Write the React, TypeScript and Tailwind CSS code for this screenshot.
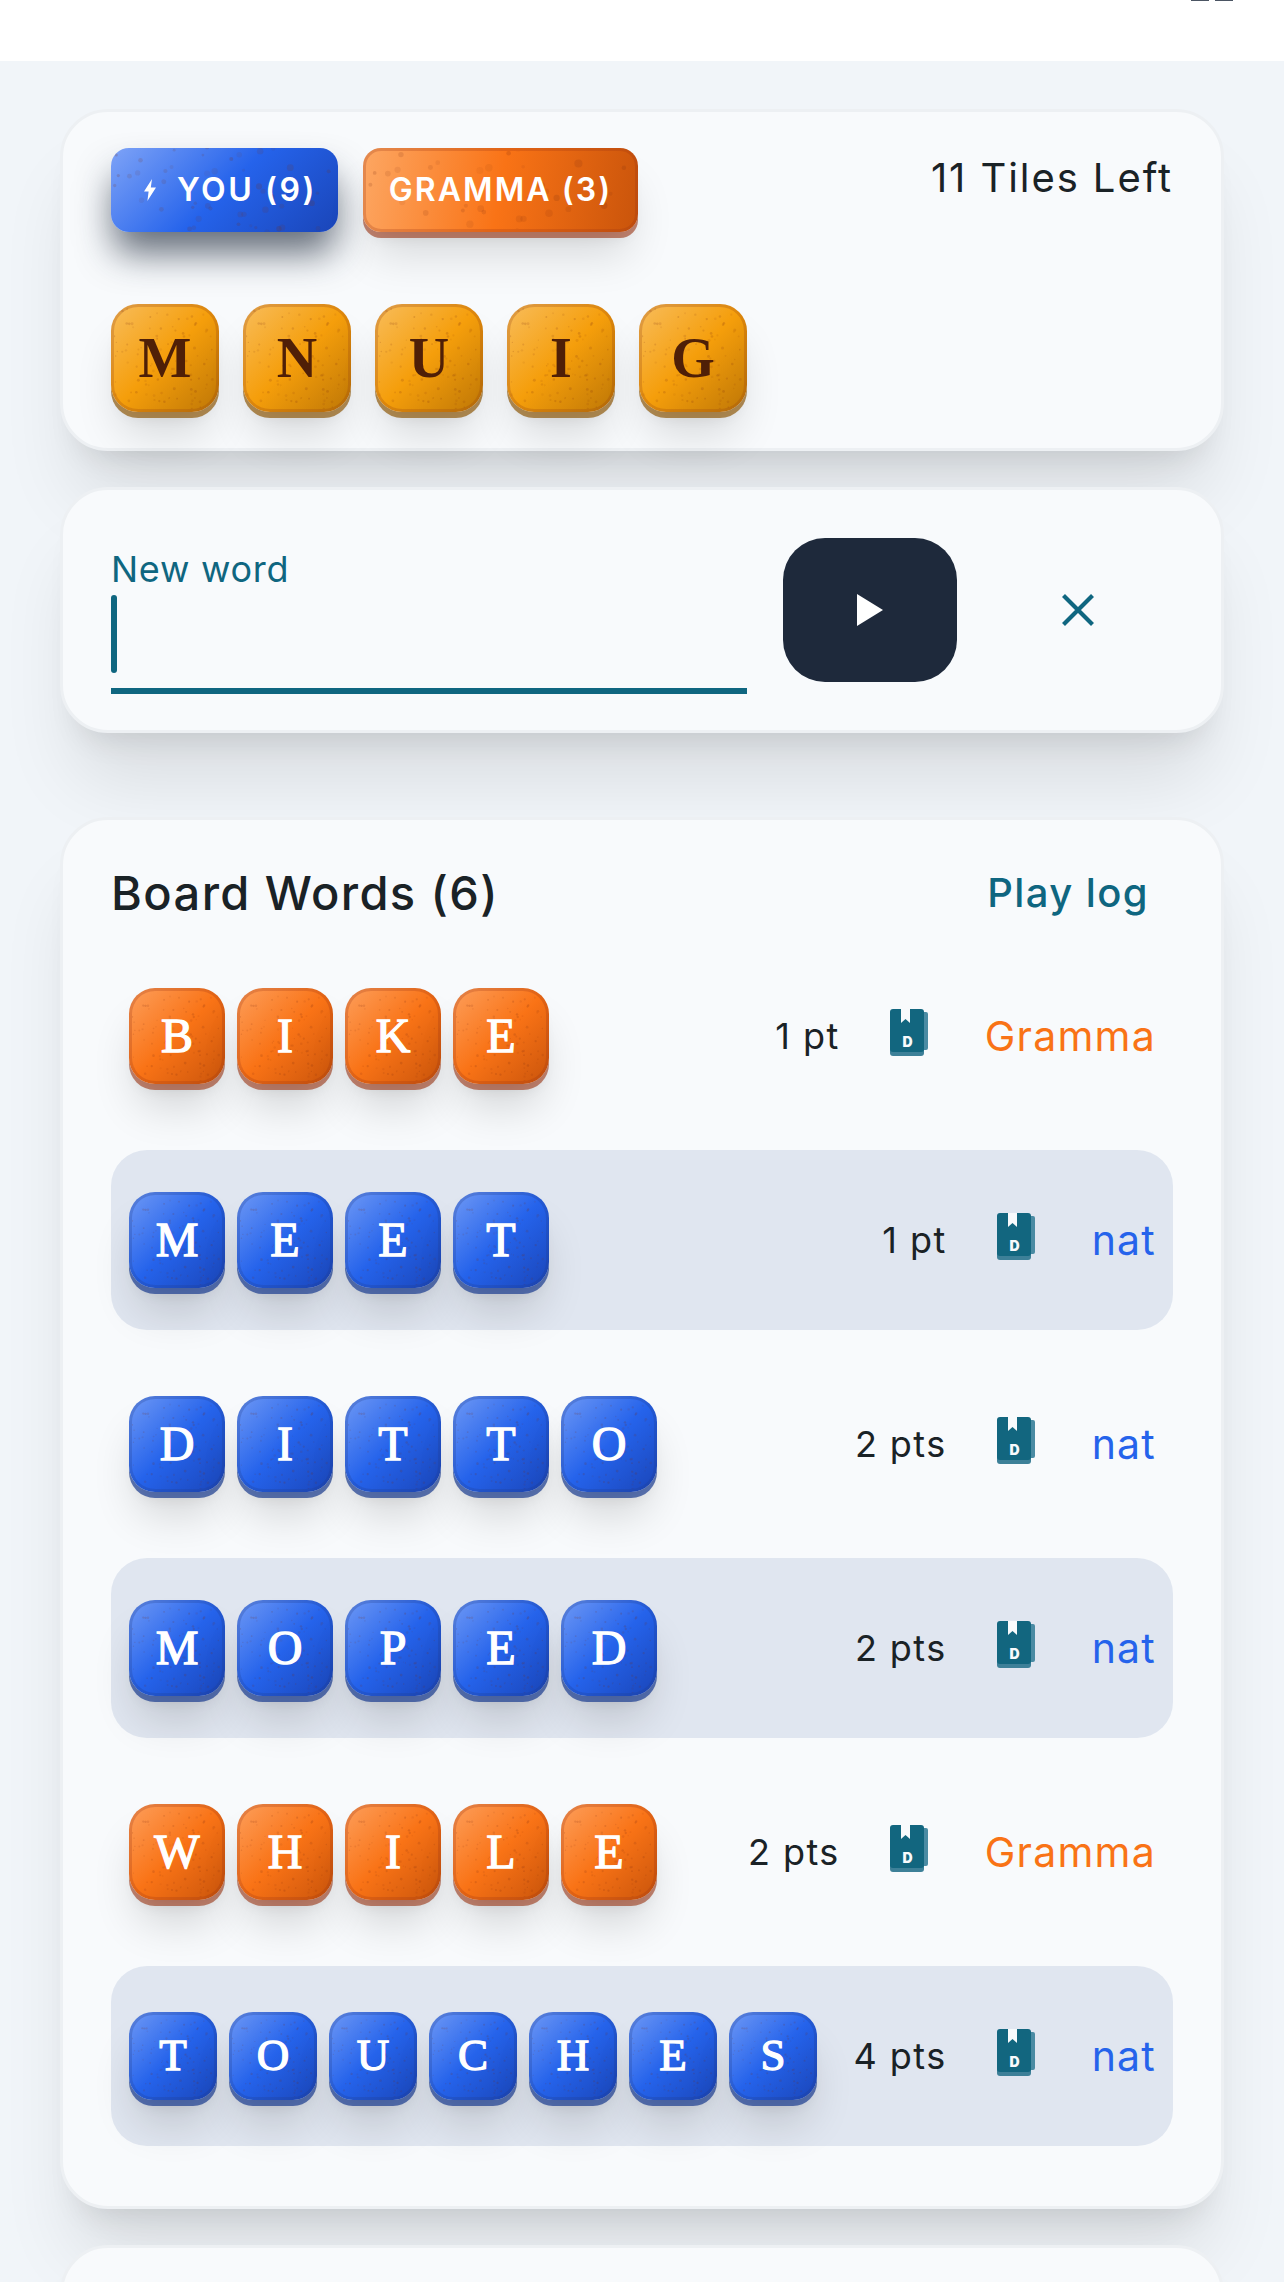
const font = { fontFamily: 'Inter, sans-serif' }

// same speckle layout on every tile, like a shared background image
function seeded(seed: number) {
  let s = seed
  return () => {
    s = (s * 9301 + 49297) % 233280
    return s / 233280
  }
}

const rand = seeded(41)
const specks = Array.from({ length: 110 }, () => ({
  x: rand() * 100,
  y: rand() * 100,
  r: 0.6 + rand() * 0.9,
  o: 0.06 + rand() * 0.14,
}))

function Speckle() {
  return (
    <svg viewBox="0 0 100 100" preserveAspectRatio="xMidYMid slice" className="absolute inset-0 h-full w-full pointer-events-none">
      {specks.map((p, i) => (
        <circle key={i} cx={p.x} cy={p.y} r={p.r} fill="#7c2d12" opacity={p.o} />
      ))}
    </svg>
  )
}

function Tile({ letter, color, size }: { letter: string; color: 'orange' | 'blue'; size: 'md' | 'sm' }) {
  const skin =
    color === 'orange'
      ? 'bg-[linear-gradient(135deg,#fd9f5c_0%,#f97316_50%,#c9540b_100%)] border-[#9a3412]/25 shadow-[0_6px_0_rgba(154,52,18,0.6),0_30px_45px_-9px_rgba(0,0,0,0.16),0_12px_18px_-12px_rgba(0,0,0,0.16)]'
      : 'bg-[linear-gradient(135deg,#6f99f5_0%,#2563eb_50%,#1a45b8_100%)] border-[#1e3a8a]/25 shadow-[0_6px_0_rgba(30,64,145,0.72),0_30px_45px_-9px_rgba(0,0,0,0.16),0_12px_18px_-12px_rgba(0,0,0,0.16)]'
  const dims = size === 'md' ? 'w-[96px] h-[96px] rounded-[26px] text-[48px]' : 'w-[88px] h-[88px] rounded-[24px] text-[45px]'
  return (
    <div
      className={`relative flex shrink-0 items-center justify-center overflow-hidden border-[3px] [background-origin:border-box] font-normal text-white [-webkit-text-stroke:1.3px_white] ${skin} ${dims}`}
      style={{ fontFamily: '"Liberation Serif", serif' }}
    >
      <Speckle />
      <span className="relative">{letter}</span>
    </div>
  )
}

function HandTile({ letter }: { letter: string }) {
  return (
    <div
      className="relative flex h-[108px] w-[108px] items-center justify-center rounded-[27px] border-[3px] border-[#92400e]/25 bg-[linear-gradient(135deg,#f8bd5c_0%,#f59e0b_50%,#bd7606_100%)] [background-origin:border-box] text-[56px] font-bold text-[#4f1f07] shadow-[0_6px_0_rgba(146,94,18,0.72),0_30px_45px_-9px_rgba(0,0,0,0.14),0_12px_18px_-12px_rgba(0,0,0,0.14)]"
      style={{ fontFamily: '"Liberation Serif", serif' }}
    >
      <Speckle />
      <span className="relative">{letter}</span>
    </div>
  )
}

function DictIcon() {
  return (
    <svg width="38" height="47" viewBox="0 0 38 47" className="shrink-0">
      <rect x="4" y="3" width="34" height="38" rx="2" fill="#4a8ba3" />
      <rect x="0" y="4" width="34" height="43" rx="3" fill="#3d8098" />
      <rect x="0" y="0" width="34" height="43" rx="3" fill="#12667f" />
      <path d="M11 0h9v14l-4.5-4L11 14z" fill="#f8fafc" />
      <text x="17.5" y="37.5" textAnchor="middle" fontSize="14" fontWeight="900" fill="#f8fafc" fontFamily="Inter, sans-serif">D</text>
    </svg>
  )
}

const words = [
  { word: 'BIKE', pts: '1 pt', by: 'Gramma' },
  { word: 'MEET', pts: '1 pt', by: 'nat' },
  { word: 'DITTO', pts: '2 pts', by: 'nat' },
  { word: 'MOPED', pts: '2 pts', by: 'nat' },
  { word: 'WHILE', pts: '2 pts', by: 'Gramma' },
  { word: 'TOUCHES', pts: '4 pts', by: 'nat' },
]

function WordRow({ word, pts, by, shaded }: { word: string; pts: string; by: string; shaded: boolean }) {
  const isGramma = by === 'Gramma'
  return (
    <div className={`flex h-[180px] items-center rounded-[36px] pl-[18px] pr-[17px] ${shaded ? 'bg-[#e0e6f0]' : ''}`}>
      <div className="flex flex-1 gap-3">
        {word.split('').map((l, i) => (
          <Tile key={i} letter={l} color={isGramma ? 'orange' : 'blue'} size={word.length > 5 ? 'sm' : 'md'} />
        ))}
      </div>
      <span className="text-[36px] leading-none tracking-[0.04em] text-[#1a2226]">{pts}</span>
      <div className="mb-[7px] ml-[50px] mr-[57px]">
        <DictIcon />
      </div>
      <span className={`text-[41px] leading-none tracking-[0.03em] ${isGramma ? 'text-[#f97316]' : 'text-[#2563eb]'}`}>{by}</span>
    </div>
  )
}

const cardClass =
  'mx-[60px] rounded-[48px] border-[3px] border-[#edf0f3] bg-[#f8fafc] shadow-[0_60px_75px_-15px_rgba(0,0,0,0.1),0_24px_30px_-18px_rgba(0,0,0,0.1)]'

export default function App() {
  return (
    <div className="h-[2282px] overflow-hidden bg-[#f1f5f9]" style={font}>
      {/* header, only the bottom edge is in frame */}
      <div className="flex h-[61px] justify-end gap-[6px] bg-white pr-[51px]">
        <div className="h-px w-[18px] bg-[#4b5563]" />
        <div className="h-px w-[18px] bg-[#4b5563]" />
      </div>

      <div className={`${cardClass} mt-[48px] h-[342px] px-[48px] pt-[36px]`}>
        <div className="flex items-start justify-between">
          <div className="flex gap-[25px]">
            <div className="relative flex h-[84px] w-[227px] items-center overflow-hidden rounded-[18px] bg-[linear-gradient(135deg,#7ea3f7_0%,#2563eb_50%,#1a45b8_100%)] pl-[33px] text-[32px] font-semibold tracking-[0.08em] text-white shadow-[0_24px_36px_-3px_rgba(30,41,59,0.68)]">
              <Speckle />
              <svg width="12" height="22" viewBox="0 0 12 22" className="relative mr-[21px] shrink-0">
                <path d="M8 0L0 12.5h4.6L3.4 22 12 8.6H6.8z" fill="#fff" />
              </svg>
              <span className="relative">YOU (9)</span>
            </div>
            <div className="relative flex h-[84px] w-[275px] items-center justify-center overflow-hidden rounded-[18px] border-[3px] border-[#9a3412]/25 bg-[linear-gradient(100deg,#fda763_0%,#f97316_50%,#c9540b_100%)] [background-origin:border-box] text-[32px] font-semibold tracking-[0.065em] text-white shadow-[0_6px_0_rgba(154,52,18,0.6),0_30px_45px_-9px_rgba(0,0,0,0.14),0_12px_18px_-12px_rgba(0,0,0,0.14)]">
              <Speckle />
              <span className="relative">GRAMMA (3)</span>
            </div>
          </div>
          <span className="text-[40px] leading-[60px] tracking-[0.048em] text-[#1a2226]">11 Tiles Left</span>
        </div>
        <div className="mt-[72px] flex gap-6">
          {'MNUIG'.split('').map((l, i) => (
            <HandTile key={i} letter={l} />
          ))}
        </div>
      </div>

      <div className={`${cardClass} mt-[36px] flex h-[246px] pl-[48px] pt-[48px]`}>
        <div className="w-[636px] pt-[11px]">
          <div className="text-[36px] leading-[40px] tracking-[0.02em] text-[#0f6680]">New word</div>
          <div className="mt-[6px] h-[78px] w-[6px] rounded-full bg-[#0f6680]" />
          <div className="mt-[15px] h-[6px] bg-[#0f6680]" />
        </div>
        <button className="ml-[36px] flex h-[144px] w-[174px] items-center justify-center rounded-[42px] bg-[#1e293b]">
          <svg width="26" height="32" viewBox="0 0 26 32">
            <path d="M0 0L26 16L0 32z" fill="#fff" />
          </svg>
        </button>
        <div className="ml-[105px] mt-[56px]">
          <svg width="32" height="32" viewBox="0 0 32 32" fill="none" stroke="#0f6680" strokeWidth="4.2">
            <path d="M1.5 1.5L30.5 30.5M30.5 1.5L1.5 30.5" />
          </svg>
        </div>
      </div>

      <div className={`${cardClass} mt-[84px] h-[1392px] px-[48px] pt-[43px]`}>
        <div className="flex items-center justify-between pr-[24px]">
          <span className="text-[47px] font-medium leading-[60px] tracking-[0.03em] text-[#1a2226]">Board Words (6)</span>
          <span className="text-[40px] font-medium leading-[60px] tracking-[0.035em] text-[#0f6680]">Play log</span>
        </div>
        <div className="mt-[23px] flex flex-col gap-6">
          {words.map((w, i) => (
            <WordRow key={w.word} {...w} shaded={i % 2 === 1} />
          ))}
        </div>
      </div>

      <div className={`${cardClass} mt-[36px] h-[200px]`} />
    </div>
  )
}
